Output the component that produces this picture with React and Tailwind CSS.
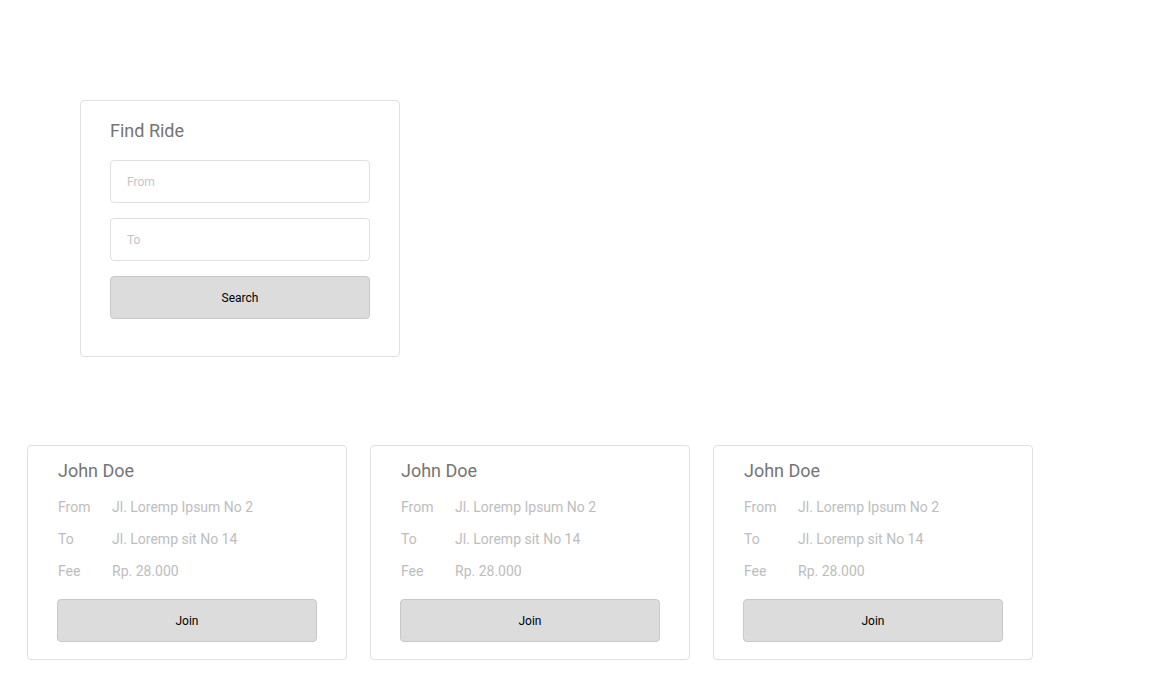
const rides = [1, 2, 3].map((id) => ({
  id,
  name: 'John Doe',
  from: 'Jl. Loremp Ipsum No 2',
  to: 'Jl. Loremp sit No 14',
  fee: 'Rp. 28.000',
}))

function RideCard({ ride }) {
  return (
    <div className="w-[320px] h-[215px] border border-[#e0e0e0] rounded-[4px] bg-white pl-[29px] pr-[30px] pt-[13px]">
      <h3 className="text-[18px] leading-[24px] pl-px text-[#757575]">{ride.name}</h3>
      <div className="mt-[8px] flex flex-col text-[14px] leading-[20px] text-[#bdbdbd]">
        <div className="flex h-[32px] items-center">
          <span className="w-[55px] pl-px">From</span>
          <span>{ride.from}</span>
        </div>
        <div className="flex h-[32px] items-center">
          <span className="w-[55px] pl-px">To</span>
          <span>{ride.to}</span>
        </div>
        <div className="flex h-[32px] items-center">
          <span className="w-[55px] pl-px">Fee</span>
          <span>{ride.fee}</span>
        </div>
      </div>
      <button className="mt-[12px] w-[260px] h-[43px] bg-[#dcdcdc] border border-[#c8c8c8] rounded-[4px] text-[12px] text-black">
        Join
      </button>
    </div>
  )
}

export default function App() {
  return (
    <div className="min-h-screen bg-white font-['Roboto',sans-serif]">
      <div className="pt-[100px] pl-[80px]">
        <div className="w-[320px] h-[257px] border border-[#e0e0e0] rounded-[4px] pl-[29px] pt-[18px]">
          <h2 className="text-[18px] leading-[24px] text-[#757575]">Find Ride</h2>
          <div className="mt-[17px] flex flex-col gap-[15px] w-[260px]">
            <input
              placeholder="From"
              className="h-[43px] border border-[#e0e0e0] rounded-[4px] px-[16px] text-[12px] placeholder:text-[#c4c4c4] outline-none"
            />
            <input
              placeholder="To"
              className="h-[43px] border border-[#e0e0e0] rounded-[4px] px-[16px] text-[12px] placeholder:text-[#c4c4c4] outline-none"
            />
            <button className="h-[43px] bg-[#dcdcdc] border border-[#c8c8c8] rounded-[4px] text-[12px] text-black">
              Search
            </button>
          </div>
        </div>
      </div>
      <div className="mt-[88px] pl-[27px] flex gap-[23px]">
        {rides.map((r) => (
          <RideCard key={r.id} ride={r} />
        ))}
      </div>
    </div>
  )
}
